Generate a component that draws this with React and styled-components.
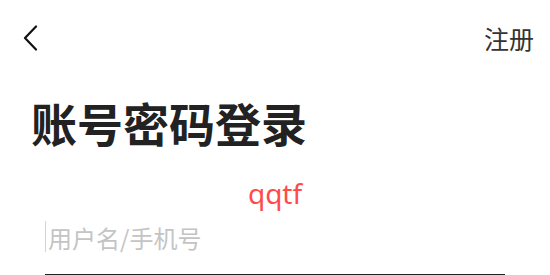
import React from "react";
import styled, { createGlobalStyle } from "styled-components";

const Global = createGlobalStyle`
  html, body { margin: 0; padding: 0; background: #fff; }
  body { font-family: "Noto Sans CJK SC", "Noto Sans", sans-serif; }
`;

const Page = styled.div`
  width: 550px;
  display: flex;
  flex-direction: column;
`;

const Header = styled.div`
  height: 76px;
  display: flex;
  align-items: center;
  justify-content: space-between;
  padding: 0 16px 0 22px;
  box-sizing: border-box;
`;

const BackButton = styled.button`
  border: 0;
  background: none;
  padding: 0;
  width: 20px;
  height: 28px;
  display: flex;
  align-items: center;
  cursor: pointer;
`;

const HeaderLink = styled.span`
  font-size: 25px;
  line-height: 1;
  color: #333;
`;

const Title = styled.h1`
  margin: 18px 0 0 31px;
  font-size: 46px;
  line-height: 56px;
  font-weight: 700;
  color: #222;
`;

const Hint = styled.div`
  margin-top: 26px;
  text-align: center;
  font-family: "Noto Sans", sans-serif;
  font-size: 28px;
  line-height: 34px;
  color: #ff4b4b;
`;

const Field = styled.label`
  margin: -2px 45px 0 45px;
  height: 68px;
  padding-top: 13px;
  display: flex;
  align-items: flex-start;
  border-bottom: 2px solid #222;
  box-sizing: border-box;
`;

const Caret = styled.span`
  width: 1px;
  height: 31px;
  background: #d4d4d4;
  margin-right: 2px;
`;

const Input = styled.input`
  flex: 1;
  height: 33px;
  border: 0;
  outline: none;
  padding: 0;
  font-family: "Noto Sans CJK SC", "Noto Sans", sans-serif;
  font-size: 24px;
  background: transparent;
  &::placeholder { color: #c4c4c4; }
`;

export default function App() {
  return (
    <Page>
      <Global />
      <Header>
        <BackButton aria-label="返回">
          <svg width="16" height="26" viewBox="0 0 16 26">
            <path d="M14 1.5 L3 13 L14 24.5" fill="none" stroke="#111" strokeWidth="2.2" strokeLinecap="round" strokeLinejoin="round" />
          </svg>
        </BackButton>
        <HeaderLink>注册</HeaderLink>
      </Header>
      <Title>账号密码登录</Title>
      <Hint>qqtf</Hint>
      <Field>
        <Caret />
        <Input placeholder="用户名/手机号" readOnly />
      </Field>
    </Page>
  );
}
